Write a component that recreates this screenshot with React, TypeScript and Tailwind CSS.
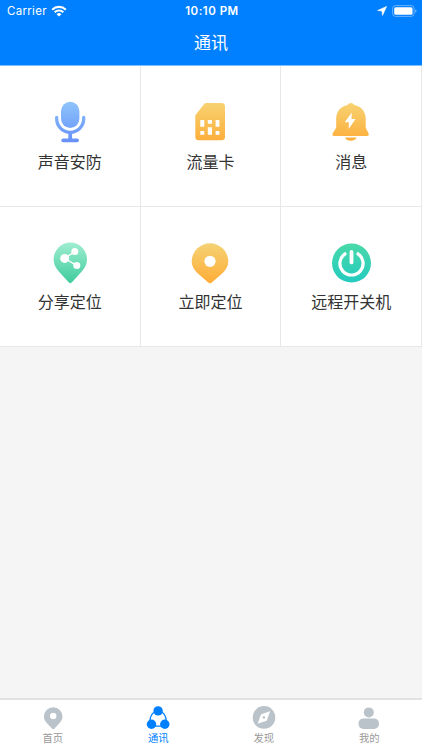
import React from 'react';

interface MenuItem {
    title: string;
    icon: React.ReactNode;
}

interface TabItem extends MenuItem {
    active?: boolean;
}

interface GradientProps {
    id: string;
    from: string;
    to: string;
}

const Gradient: React.FC<GradientProps> = ({ id, from, to }) => (
    <defs>
        <linearGradient id={id} x1="0" y1="0" x2="0" y2="42" gradientUnits="userSpaceOnUse">
            <stop offset="0" stopColor={from} />
            <stop offset="1" stopColor={to} />
        </linearGradient>
    </defs>
);

const MicIcon = () => (
    <svg viewBox="0 0 42 42" className="h-[42px] w-[42px]">
        <Gradient id="mic" from="#8fc5fb" to="#658ff8" />
        <rect x="12" y="0.8" width="18.4" height="26.2" rx="9.2" fill="url(#mic)" />
        <path d="M7.7 16.5v1.3a13.5 13.5 0 0 0 27 0v-1.3" fill="none" stroke="url(#mic)" strokeWidth="3.3" strokeLinecap="round" />
        <path d="M19.3 31h3.8v7h-3.8z" fill="url(#mic)" />
        <rect x="12.3" y="37.6" width="17.6" height="3.6" rx="1.8" fill="url(#mic)" />
    </svg>
);

const SimIcon = () => (
    <svg viewBox="0 0 42 42" className="h-[42px] w-[42px]">
        <Gradient id="sim" from="#f7d474" to="#fdac38" />
        <path d="M17.3 2h15.2a3.5 3.5 0 0 1 3.5 3.5v30.3a3.5 3.5 0 0 1-3.5 3.5H9.8a3.5 3.5 0 0 1-3.5-3.5V15.3a3 3 0 0 1 .8-2l8.1-10.3a3 3 0 0 1 2.1-1z" fill="url(#sim)" />
        <path d="M11.3 19h4v6.7h-4zM11.3 30h4v3.8h-4zM18.8 19h4.2v3.8h-4.2zM18.8 26.3h4.2v7.5h-4.2zM26.6 19h3.8v6.7h-3.8zM26.6 30h3.8v3.8h-3.8z" fill="#fff" />
    </svg>
);

const BellIcon = () => (
    <svg viewBox="0 0 42 42" className="h-[42px] w-[42px]">
        <Gradient id="bell" from="#f7d474" to="#fdac38" />
        <path d="M17.5 3.9a4 4 0 0 1 6.8 0C31.5 5.2 35.5 10.5 35.7 17.500v8.3c0 2.200 2.700 5.700 3 7.200.3 1.300-.3 2-1.400 2H3.900c-1.100 0-1.700-.8-1.400-2 .4-1.500 3.700-5 3.700-7.200v-8.300C6.400 10.500 10.400 5.200 17.500 3.900z" fill="url(#bell)" />
        <path d="M15 36.500h11.600c-1 2.100-3.100 3.300-5.800 3.300S16 38.600 15 36.500z" fill="url(#bell)" />
        <path d="M21.800 11.600 14.700 21.300h4.200L18.700 28l6.800-9.900h-4z" fill="#fff" />
    </svg>
);

const SharePinIcon = () => (
    <svg viewBox="0 0 42 42" className="h-[42px] w-[42px]">
        <Gradient id="share" from="#a0eed1" to="#3ccb9b" />
        <path d="M21.300.6a16.700 16.700 0 0 0-16.700 16.700c0 4.800 2 8.400 5 12l9.800 10.800a2.500 2.500 0 0 0 3.800 0L33 29.300c3-3.600 5-7.200 5-12A16.700 16.700 0 0 0 21.300.6z" fill="url(#share)" />
        <path d="M25.700 9.600 15.700 16.300l12 7.300" fill="none" stroke="#fff" strokeWidth="1.3" />
        <circle cx="15.7" cy="16.4" r="4.5" fill="#fff" />
        <circle cx="25.8" cy="9.6" r="3.5" fill="#fff" />
        <circle cx="27.8" cy="23.6" r="3.5" fill="#fff" />
    </svg>
);

const PinIcon = () => (
    <svg viewBox="0 0 42 42" className="h-[42px] w-[42px]">
        <Gradient id="pin" from="#f4d376" to="#ffac35" />
        <path d="M21 1.300A18.300 18.300 0 0 0 2.700 19.500c0 4.600 2.200 8 5.300 11.200l11.200 9.900a2.700 2.700 0 0 0 3.600 0L34 30.700c3.100-3.200 5.300-6.600 5.300-11.200A18.300 18.300 0 0 0 21 1.300z" fill="url(#pin)" />
        <circle cx="21" cy="19.3" r="5.6" fill="#fff" />
    </svg>
);

const PowerIcon = () => (
    <svg viewBox="0 0 42 42" className="h-[42px] w-[42px]">
        <Gradient id="power" from="#4bd9a9" to="#22cbc0" />
        <circle cx="21.5" cy="21.1" r="19.5" fill="url(#power)" />
        <path d="M15 11.800a11.600 11.600 0 1 0 13 0" fill="none" stroke="#fff" strokeWidth="3.2" strokeLinecap="round" />
        <path d="M21.500 9.900v10.500" stroke="#fff" strokeWidth="3.8" strokeLinecap="round" />
    </svg>
);

const HomeIcon = () => (
    <svg viewBox="0 0 24 24" className="h-6 w-6" fill="currentColor">
        <path fillRule="evenodd" d="M12.200 1.300a9.300 9.300 0 0 0-9.300 9.300c0 2.500 1.100 4.500 2.700 6.200l5.300 5.600a1.800 1.800 0 0 0 2.600 0l5.300-5.600c1.600-1.700 2.700-3.700 2.700-6.200a9.300 9.300 0 0 0-9.300-9.300zm0 5.500a3.200 3.200 0 1 1 0 6.400 3.200 3.200 0 0 1 0-6.400z" />
    </svg>
);

const LinkIcon = () => (
    <svg viewBox="0 0 24 24" className="h-6 w-6" fill="currentColor">
        <path d="M8.500 6C5.500 8 4 10.500 4 15M15.700 6c3 2 4.500 4.500 4.500 9M8 20.200h8.200" fill="none" stroke="currentColor" strokeWidth="1.3" />
        <circle cx="12.1" cy="4.9" r="4.7" />
        <circle cx="5.5" cy="18.3" r="4.7" />
        <circle cx="18.8" cy="18.3" r="4.7" />
    </svg>
);

const CompassIcon = () => (
    <svg viewBox="0 0 24 24" className="h-6 w-6" fill="currentColor">
        <circle cx="12" cy="11.4" r="11.3" />
        <path d="M17.700 5.600 14.600 14.500 6 17.300 9.200 8.600z" fill="#fff" stroke="#fff" strokeWidth="0.5" strokeLinejoin="round" />
        <circle cx="11.9" cy="11.5" r="1.3" />
    </svg>
);

const UserIcon = () => (
    <svg viewBox="0 0 24 24" className="h-6 w-6" fill="currentColor">
        <circle cx="11.8" cy="6.4" r="5" />
        <rect x="1.5" y="12.4" width="20.5" height="10.6" rx="5" />
    </svg>
);

const menuItems: MenuItem[] = [
    { title: '声音安防', icon: <MicIcon /> },
    { title: '流量卡', icon: <SimIcon /> },
    { title: '消息', icon: <BellIcon /> },
    { title: '分享定位', icon: <SharePinIcon /> },
    { title: '立即定位', icon: <PinIcon /> },
    { title: '远程开关机', icon: <PowerIcon /> },
];

const tabs: TabItem[] = [
    { title: '首页', icon: <HomeIcon /> },
    { title: '通讯', icon: <LinkIcon />, active: true },
    { title: '发现', icon: <CompassIcon /> },
    { title: '我的', icon: <UserIcon /> },
];

const StatusBar = () => (
    <div className="grid h-[22px] grid-cols-3 items-center pr-[5px] pl-[7px] font-['Inter','Liberation_Sans',sans-serif] text-[11.5px] leading-none">
        <div className="flex items-center gap-1">
            <span className="pt-[2px] tracking-[0.3px]">Carrier</span>
            <svg viewBox="0 0 16 12" className="h-3 w-4">
                <path d="M1.200 4.700a9.700 9.700 0 0 1 13.600 0M3.700 7.300a6.100 6.100 0 0 1 8.600 0" fill="none" stroke="#fff" strokeWidth="2.1" />
                <path d="M5.600 9.200a3.400 3.400 0 0 1 4.800 0L8 11.600z" fill="#fff" />
            </svg>
        </div>
        <span className="pt-[2px] text-center font-semibold tracking-[0.5px]">10:10 PM</span>
        <div className="flex items-center justify-end gap-[5px]">
            <svg viewBox="0 0 10 10" className="h-[10px] w-[10px]">
                <path d="M9.600.4 5.500 9.400 5 5 .6 4.500z" fill="#fff" stroke="#fff" strokeWidth="0.6" strokeLinejoin="round" />
            </svg>
            <svg viewBox="0 0 25 12" className="h-3 w-[25px]">
                <rect x="0.6" y="0.6" width="21.5" height="10.8" rx="3" fill="none" stroke="#fff" strokeOpacity="0.4" />
                <rect x="2.2" y="2.2" width="18.3" height="7.6" rx="1.5" fill="#fff" />
                <path d="M23.300 4.200v3.600q1.200-.6 1.200-1.800t-1.200-1.800z" fill="#fff" fillOpacity="0.5" />
            </svg>
        </div>
    </div>
);

const App: React.FC = () => {
    return (
        <div className="flex h-[750px] w-[422px] flex-col bg-[#f5f5f5] font-['Noto_Sans_CJK_SC',sans-serif]">
            <header className="h-[66px] shrink-0 border-b border-[#80bfff] bg-[#007fff] text-white">
                <StatusBar />
                <h1 className="flex h-10 items-center justify-center text-[17px]">通讯</h1>
            </header>

            <main className="flex-1">
                <div className="grid grid-cols-3">
                    {menuItems.map((item) => (
                        <div key={item.title} className="flex h-[140.6px] flex-col items-center border-r border-b border-[#e8e8e8] bg-white pt-[35px]">
                            {item.icon}
                            <span className="mt-[5.5px] text-[16px] leading-6 text-[#333]">{item.title}</span>
                        </div>
                    ))}
                </div>
            </main>

            <nav className="grid h-[52px] shrink-0 grid-cols-4 border-t-2 border-[#e2e2e2] bg-white">
                {tabs.map((tab) => (
                    <div key={tab.title} className={tab.active ? 'flex flex-col items-center pt-[6px] text-[#007fff]' : 'flex flex-col items-center pt-[6px] text-[#bac3ca]'}>
                        {tab.icon}
                        <span className={tab.active ? 'text-[10.3px] leading-4' : 'text-[10.3px] leading-4 text-[#999]'}>{tab.title}</span>
                    </div>
                ))}
            </nav>
        </div>
    );
};

export default App;
